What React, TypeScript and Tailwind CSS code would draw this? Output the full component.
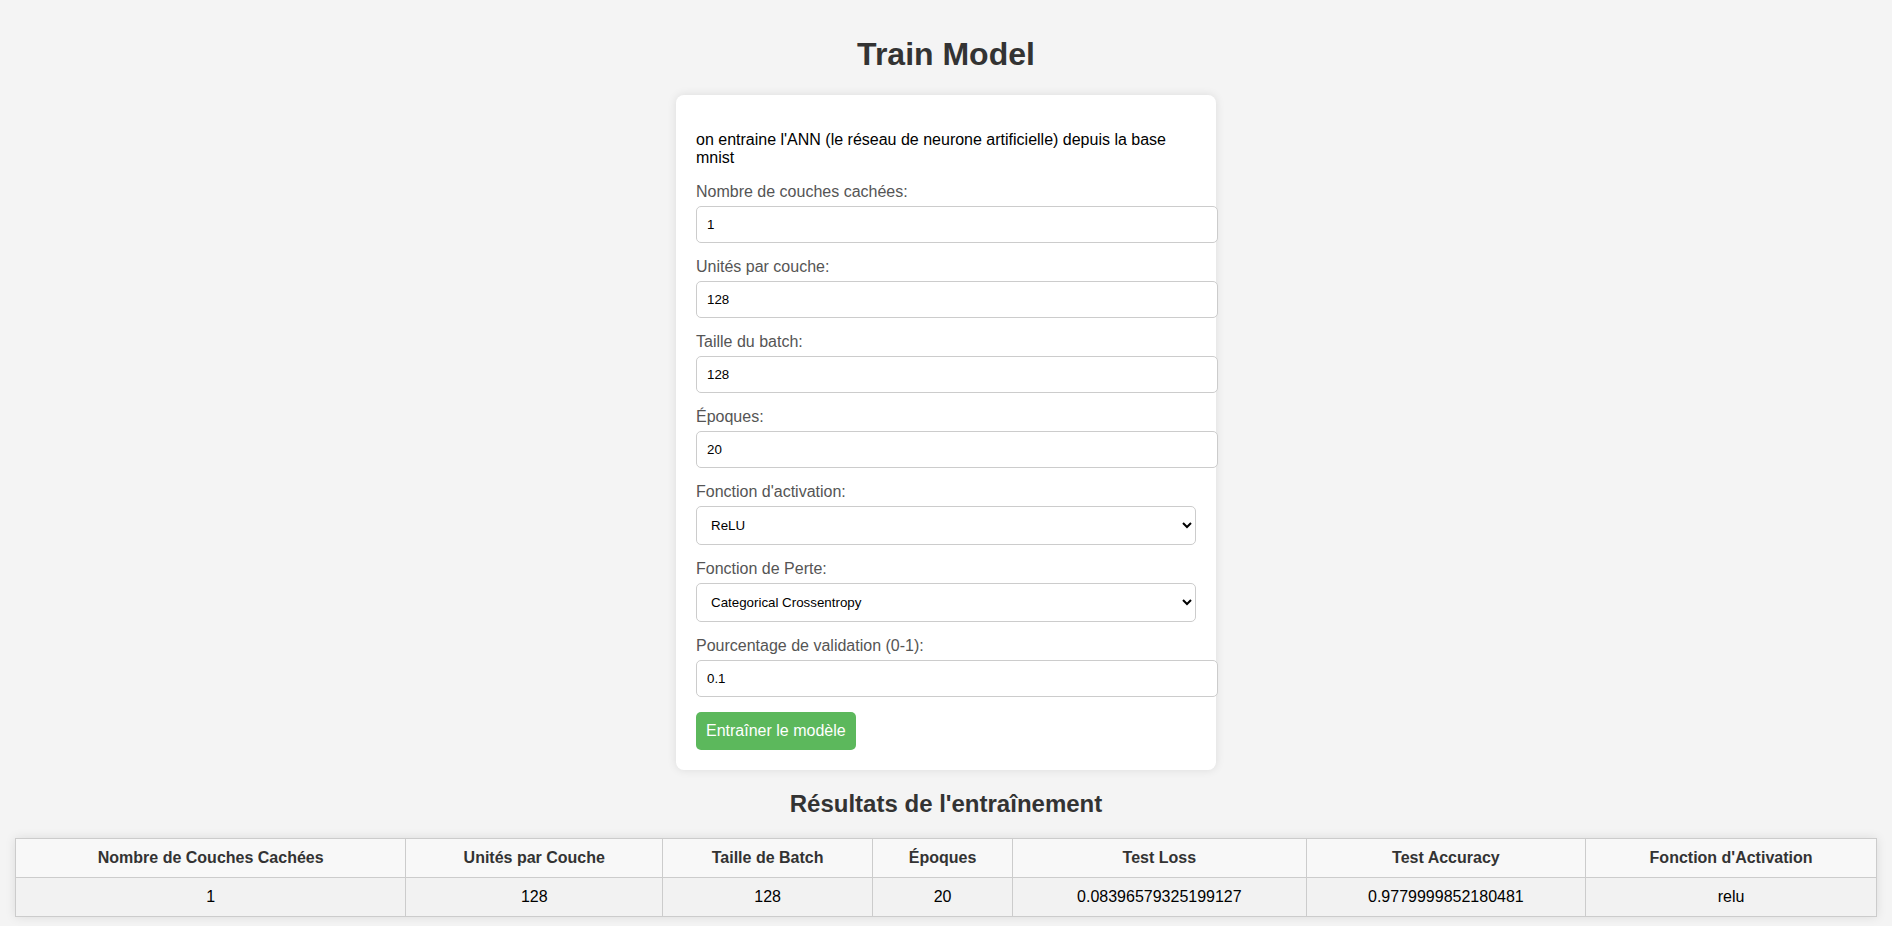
import { useState } from "react";

const fields = [
  { id: "hidden_layers", label: "Nombre de couches cachées:", value: "1" },
  { id: "units", label: "Unités par couche:", value: "128" },
  { id: "batch_size", label: "Taille du batch:", value: "128" },
  { id: "epochs", label: "Époques:", value: "20" },
];

const headers = [
  "Nombre de Couches Cachées",
  "Unités par Couche",
  "Taille de Batch",
  "Époques",
  "Test Loss",
  "Test Accuracy",
  "Fonction d'Activation",
];

const results = [
  ["1", "128", "128", "20", "0.08396579325199127", "0.9779999852180481", "relu"],
];

const labelCls = "mb-[5px] block text-[16px] leading-[18px] text-[#555]";
const inputCls =
  "mb-[15px] block h-[37px] w-[522px] rounded-[5px] border border-[#ccc] bg-white p-[10px] text-[13.33px] leading-[15px] text-black outline-none";
const selectCls =
  "mb-[15px] block h-[39px] w-full rounded-[5px] border border-[#ccc] bg-white px-[10px] text-[13.33px] text-black outline-none";

export default function App() {
  const [values, setValues] = useState<Record<string, string>>(
    Object.fromEntries(fields.map((f) => [f.id, f.value]))
  );
  const [activation, setActivation] = useState("relu");
  const [loss, setLoss] = useState("categorical_crossentropy");
  const [validation, setValidation] = useState("0.1");

  return (
    <div className="min-h-screen bg-[#f4f4f4] p-[15px] font-['Liberation_Sans',Arial,sans-serif] text-black">
      <h1 className="mt-[21px] mb-[22px] text-center text-[32px] font-bold leading-[37px] text-[#333]">
        Train Model
      </h1>

      {/* Form card */}
      <div className="mx-auto w-[540px] rounded-[8px] bg-white p-[20px] shadow-[0_0_10px_rgba(0,0,0,0.1)]">
        <form onSubmit={(e) => e.preventDefault()}>
          <p className="my-[16px] text-[16px] leading-[18px]">
            on entraine l'ANN (le réseau de neurone artificielle) depuis la base mnist
          </p>

          {fields.map((f) => (
            <div key={f.id}>
              <label htmlFor={f.id} className={labelCls}>
                {f.label}
              </label>
              <input
                id={f.id}
                type="text"
                value={values[f.id]}
                onChange={(e) =>
                  setValues({ ...values, [f.id]: e.target.value })
                }
                className={inputCls}
              />
            </div>
          ))}

          <label htmlFor="activation" className={labelCls}>
            Fonction d'activation:
          </label>
          <select
            id="activation"
            value={activation}
            onChange={(e) => setActivation(e.target.value)}
            className={selectCls}
          >
            <option value="relu">ReLU</option>
            <option value="sigmoid">Sigmoid</option>
            <option value="tanh">Tanh</option>
          </select>

          <label htmlFor="loss" className={labelCls}>
            Fonction de Perte:
          </label>
          <select
            id="loss"
            value={loss}
            onChange={(e) => setLoss(e.target.value)}
            className={selectCls}
          >
            <option value="categorical_crossentropy">
              Categorical Crossentropy
            </option>
            <option value="mse">Mean Squared Error</option>
          </select>

          <label htmlFor="validation" className={labelCls}>
            Pourcentage de validation (0-1):
          </label>
          <input
            id="validation"
            type="text"
            value={validation}
            onChange={(e) => setValidation(e.target.value)}
            className={inputCls}
          />

          <button
            type="submit"
            className="block rounded-[5px] bg-[#5cb85c] p-[10px] text-[16px] leading-[18px] text-white hover:bg-[#4cae4c]"
          >
            Entraîner le modèle
          </button>
        </form>
      </div>

      <h2 className="my-[20px] text-center text-[24px] font-bold leading-[28px] text-[#333]">
        Résultats de l'entraînement
      </h2>

      <table className="w-full border-collapse shadow-[0_0_10px_rgba(0,0,0,0.1)]">
        <thead>
          <tr>
            {headers.map((h) => (
              <th
                key={h}
                className="border border-[#ccc] bg-[#f8f8f8] p-[10px] text-center text-[16px] font-bold leading-[18px] text-[#333]"
              >
                {h}
              </th>
            ))}
          </tr>
        </thead>
        <tbody>
          {results.map((row, i) => (
            <tr key={i} className="bg-[#f2f2f2]">
              {row.map((cell, j) => (
                <td
                  key={j}
                  className="border border-[#ccc] p-[10px] text-center text-[16px] leading-[18px]"
                >
                  {cell}
                </td>
              ))}
            </tr>
          ))}
        </tbody>
      </table>
    </div>
  );
}
